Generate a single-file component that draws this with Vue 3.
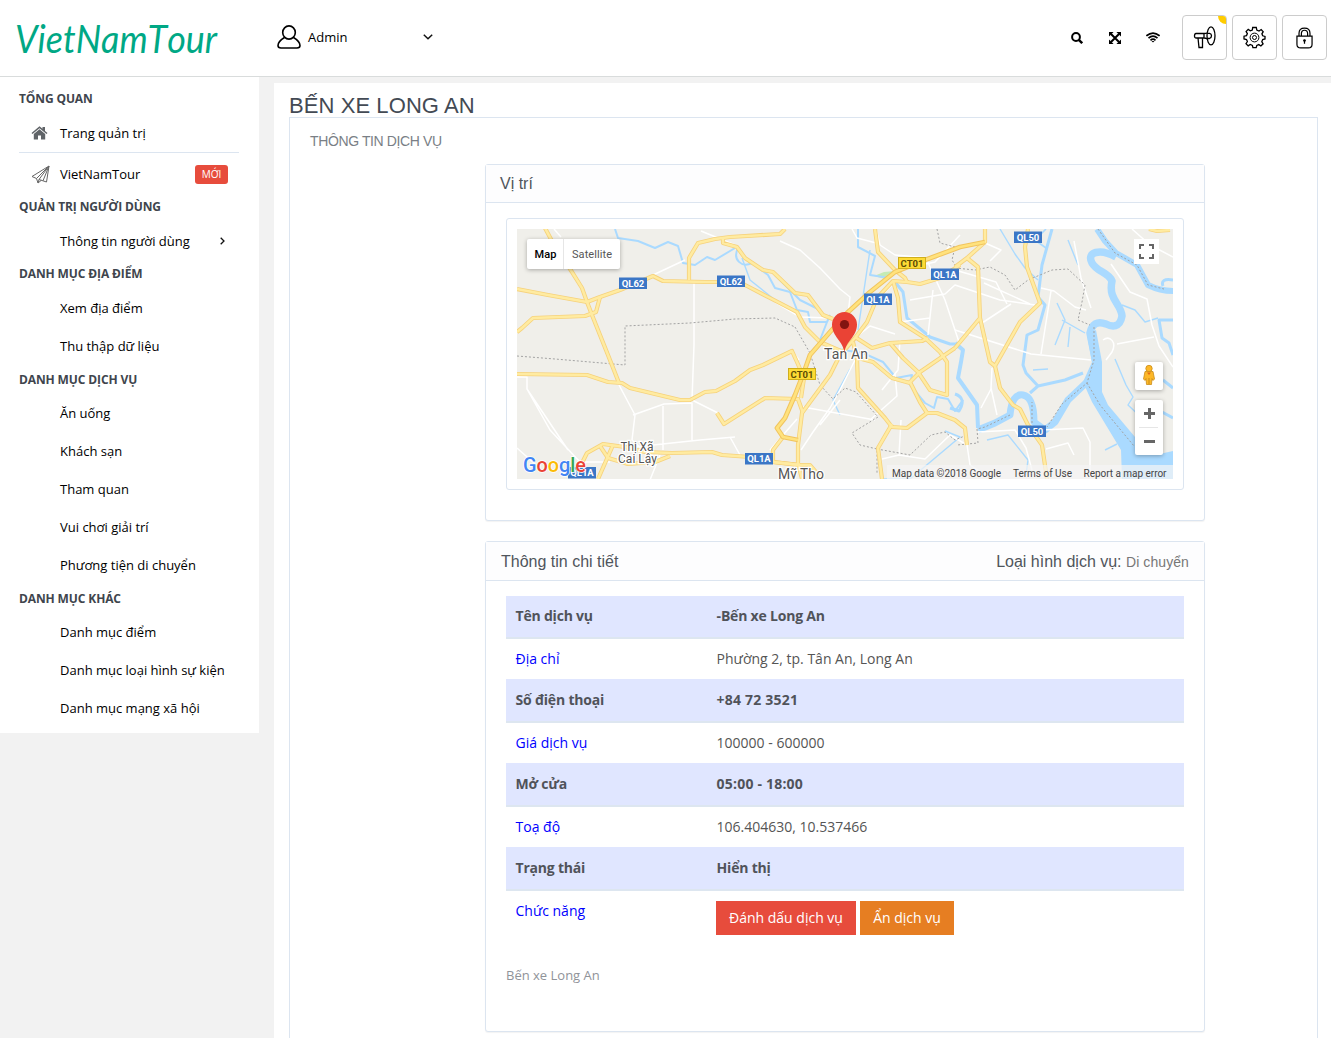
<script setup>
const sections = [
  { title: 'TỔNG QUAN', items: [{ label: 'Trang quản trị', icon: 'home', line: true }, { label: 'VietNamTour', icon: 'plane', badge: 'MỚI' }] },
  { title: 'QUẢN TRỊ NGƯỜI DÙNG', items: [{ label: 'Thông tin người dùng', arrow: true }] },
  { title: 'DANH MỤC ĐỊA ĐIỂM', items: [{ label: 'Xem địa điểm' }, { label: 'Thu thập dữ liệu' }] },
  {
    title: 'DANH MỤC DỊCH VỤ',
    items: [{ label: 'Ăn uống' }, { label: 'Khách sạn' }, { label: 'Tham quan' }, { label: 'Vui chơi giải trí' }, { label: 'Phương tiện di chuyển' }],
  },
  { title: 'DANH MỤC KHÁC', items: [{ label: 'Danh mục điểm' }, { label: 'Danh mục loại hình sự kiện' }, { label: 'Danh mục mạng xã hội' }] },
]

const rows = [
  { label: 'Tên dịch vụ', value: '-Bến xe Long An', strong: true },
  { label: 'Địa chỉ', value: 'Phường 2, tp. Tân An, Long An' },
  { label: 'Số điện thoại', value: '+84 72 3521', strong: true, numeric: true },
  { label: 'Giá dịch vụ', value: '100000 - 600000' },
  { label: 'Mở cửa', value: '05:00 - 18:00', strong: true, numeric: true },
  { label: 'Toạ độ', value: '106.404630, 10.537466' },
  { label: 'Trạng thái', value: 'Hiển thị', strong: true },
]

const highways = [
  'M545 228L553 243L572 272L582 288L587 302L592 315L608 355L619 383',
  'M517 289L548 295L587 302L600 297L620 290L653 276L663 281L705 282H738L745 285L770 298L797 312L805 327L820 342L843 352',
  'M600 297L596 312L585 316L533 318L522 328L517 332',
  'M517 374L587 375L608 382L622 383L630 388L680 400H690L705 392L716 391L735 381L750 370L763 365L792 351L797 362L804 378L801 398',
  'M689 280V258L698 243L715 239L730 237L780 234L785 229',
  'M723 237V243L737 247L745 258L763 270L773 272L795 293L808 295L823 315L833 319',
  'M960 265L940 278L920 284L907 282L893 281L877 298L867 322L855 338L840 355L830 375L802 413L798 445V463L802 479',
  'M783 437L773 450V462L800 465H810L822 479',
  'M582 463L587 453L603 444L625 447L645 452L672 453L712 452L722 455L750 457L773 462L800 465',
  'M598 479L613 445M600 446L608 458L628 464L655 462L670 456',
  'M717 413L724 424L735 417L765 398L798 399L803 413',
  'M875 229L878 252L895 270L905 278L907 282',
  'M893 281L898 298L900 322L925 338L940 352L947 362V395L930 390L918 372L903 358L890 343',
  'M855 337L872 348L890 343L922 341L928 338',
  'M955 348L920 372L910 382L920 402L927 413L907 428L892 427L885 418L858 388L857 358L853 342',
  'M858 358L873 362L892 378L910 383',
  'M892 424L878 448L882 479',
  'M927 413H937L955 420L965 428L967 445',
  'M985 229V242L967 258L955 267',
  'M967 258L978 267L980 318L955 348M980 318L990 362L995 366L1020 322L1040 303L1027 267L1025 247L1028 229',
  'M995 366L1000 388L1013 405L1020 409L1028 425L1042 445L1047 479',
  'M1149 229L1157 231L1170 230',
]
const motorways = ['M985 242L960 247L925 260L895 272L870 292L847 313L830 332L810 355L804 372L795 395L785 418L777 428L783 437L798 440']

const streets = [
  'M517 377H527V389L550 430L580 462M527 389L568 450M517 448L535 464M619 385L635 415L632 440L645 452M633 415L650 409L664 404L692 403L692 440',
  'M694 282V345L692 400L720 414M663 406V450M653 275L685 260M735 245L701 231M554 229L561 237M625 448L700 440L735 437M650 480L660 455M580 462H610',
  'M780 241L800 250L820 268L840 289L850 297L848 315M792 351L799 360M830 318L800 317L775 302M855 338L870 326L895 334M896 281L877 300',
  'M803 407L875 420M855 360L840 390L830 408L813 432L801 450M840 400L820 425M797 419L770 450M730 437L740 455M882 390L898 370L900 340M870 420L897 396L895 374',
  'M901 420L899 455L882 459M899 455L925 459L950 435L967 445M876 229L880 245L895 255L930 258M907 268L935 262L960 235M926 258L945 300L960 345M910 300L945 294L955 285L1000 300L1035 305M933 290L928 335M900 322L930 318',
  'M955 270L996 282L1007 304M1011 304L979 325M955 330L1031 354L1091 360M984 283L1030 304M985 243L1001 250L990 261M1041 288L1054 291L1075 307L1086 310M1051 291L1041 354M1074 241L1081 278L1091 308M1111 264L1130 292L1147 299L1152 325L1159 346L1173 367',
  'M992 368L991 388L997 415M981 408L991 389M978 432L1015 430L1026 448L1032 470M1042 430L1083 428L1090 442V475M1046 449L1068 443L1074 455M967 445L970 465L985 475M1103 340C1110 335 1117 342 1112 352L1106 360M1117 344L1154 337M1173 257L1150 245L1132 229M852 229L857 238L880 244',
]
const borders = [
  'M517 356L555 359L625 365V326L690 323L735 319L775 318L795 327',
  'M795 327L810 353L820 385L833 399L845 388L856 392L878 417L852 433L860 445L877 449V473M877 449L910 455L931 435L945 432L955 440L967 435',
  'M955 268L975 270L990 267L1005 275L1015 290L1028 280L1052 270L1068 269L1085 285L1082 302L1078 320L1090 325',
  'M937 229L940 243L955 247L952 260L958 270M1098 229L1115 253L1137 265L1148 285L1164 289M1094 327V360L1087 383L1062 404L1047 427M1087 383L1100 405L1134 446M1032 423V402M1010 415L985 427L977 429L978 443L957 445',
]
const rivers = [
  { w: 2, d: 'M615 229L618 238L638 241L655 248L668 242L678 246L683 263L695 265L707 257L715 260L735 248M738 248C732 260 742 268 752 263L768 275L775 288L790 292L797 310L808 312L810 322L827 322L830 315M827 322L820 340L830 348L863 353L883 362L896 378L912 375L910 385L925 403L934 408L937 397L948 399L955 411L963 400' },
  { w: 2, d: 'M858 229V247L875 256L870 275L890 278M820 310L800 300L775 275' },
  { w: 3, d: 'M895 282L903 292L907 318L930 337L950 344H955' },
  { w: 4, d: 'M955 343L963 350L961 362L958 378L977 405L978 428' },
  { w: 7, d: 'M978 430L995 423L1010 415Q1012 393 1023 395T1034 422L1045 430L1055 422L1068 400L1087 382' },
  { w: 3, d: 'M1083 373L1065 380L1038 386L1026 373L1023 365L1027 335L1038 330L1045 305L1038 297L1042 265L1052 229M1038 386L1030 393' },
  { w: 1.6, d: 'M1046 248L1035 240L1046 229' },
  { w: 1.4, d: 'M1000 229L1015 254L1025 268L1038 280M1057 303L1065 320L1055 345M1078 265L1068 240M1062 320L1085 333M1070 327L1068 347M987 440L1008 435L1028 460L1026 475M1122 305L1135 310L1145 322L1158 318M1115 359L1126 385L1133 397L1128 405L1144 420M881 479L910 479L960 437L945 431M1117 444L1105 450M1033 370L1048 369M775 300L750 280L742 258M840 415L833 400L850 369M870 250L858 330' },
  { w: 6, d: 'M1097 229L1105 241L1116 253L1137 265L1148 285Q1160 291 1173 291' },
  { w: 7.5, d: 'M1116 257C1100 248 1086 252 1092 263C1097 272 1108 272 1112 281C1108 300 1121 303 1122 316C1120 328 1112 327 1106 324Q1093 319 1090 333L1096 363' },
  { w: 3, d: 'M1173 320H1159L1162 338L1169 343L1173 355M1163 286Q1160 278 1173 280M1163 380L1173 388M1162 412L1173 418M955 394Q967 398 959 411L950 408' },
]
const shields = [
  { x: 619, y: 277.5, t: 'QL62' }, { x: 717, y: 275.5, t: 'QL62' }, { x: 864, y: 293.5, t: 'QL1A' }, { x: 931, y: 268.5, t: 'QL1A' },
  { x: 1014, y: 231.5, t: 'QL50' }, { x: 1018, y: 425.5, t: 'QL50' }, { x: 745, y: 453, t: 'QL1A' }, { x: 568, y: 467, t: 'QL1A' },
]
const tolls = [{ x: 898, y: 257, t: 'CT01' }, { x: 788, y: 368, t: 'CT01' }]
</script>

<template>
  <div class="page">
    <header class="topbar">
      <svg class="logo" width="220" height="70" viewBox="0 0 220 70">
        <text x="15" y="53" textLength="202" lengthAdjust="spacingAndGlyphs">VietNamTour</text>
      </svg>
      <div class="user">
        <svg width="24" height="24" viewBox="0 0 24 24" fill="none" stroke="#000" stroke-width="1.6">
          <ellipse cx="12" cy="7.5" rx="6.3" ry="6.6" />
          <path d="M7.5 12.5Q1 16.5 1 20.5Q1 23 4 23H20Q23 23 23 20.500Q23 16.500 16.500 12.500" />
        </svg>
        <span class="name">Admin</span>
        <svg width="10" height="6" viewBox="0 0 10 6" fill="none" stroke="#111" stroke-width="1.5"><path d="M.8 .8L5 4.800L9.200 .8" /></svg>
      </div>
      <nav class="tools">
        <svg width="12" height="12" viewBox="0 0 12 12" fill="none" stroke="#000" stroke-width="2"><circle cx="5" cy="5" r="3.900" /><path d="M7.800 7.800L11.200 11.200" stroke-width="2.400" /></svg>
        <svg width="12" height="12" viewBox="0 0 12 12"><path d="M2 2L10 10M10 2L2 10" stroke="#000" stroke-width="2" /><path d="M0 0H4.600L0 4.600ZM12 0V4.600L7.400 0ZM0 12V7.400L4.600 12ZM12 12H7.400L12 7.400Z" /></svg>
        <svg width="14" height="11" viewBox="0 0 14 11" fill="none" stroke="#000" stroke-width="1.700"><path d="M.4 3.900Q7 -1.800 13.600 3.900M2.500 6.200Q7 2.200 11.500 6.200M4.500 8.300Q7 6 9.500 8.300" /><path d="M5.500 8.900H8.500L7 10.600Z" fill="#000" stroke="none" /></svg>
      </nav>
      <div class="buttons">
        <div class="sq">
          <svg width="23" height="23" viewBox="0 0 23 23" fill="none" stroke="#000" stroke-width="1.300">
            <ellipse cx="18" cy="9.800" rx="4" ry="9" /><path d="M14.500 7Q13 7.500 11 7.500H3Q1.500 7.500 1.500 9.800T3 12H11Q13 12 14.500 13M11 7.500V12M5 12L6 21.500H9.500V12" /><path d="M14.300 7.300H16.500Q18.500 7.700 18.500 9.800T16.500 12.500H14.300" />
          </svg>
          <i class="dot"></i>
        </div>
        <div class="sq">
          <svg width="23" height="23" viewBox="0 0 23 23" fill="none" stroke="#000" stroke-width="1.300">
            <path d="M9.700 1.500H13.300L13.800 4.100L16 5L18.200 3.500L20.200 5.700L18.900 7.800L19.700 9.800L22 10.400V13L19.700 13.500L18.800 15.700L20.100 17.800L17.900 20L15.800 18.600L13.800 19.400L13.200 21.700H9.900L9.400 19.400L7.200 18.500L5.200 19.900L3 17.600L4.400 15.500L3.500 13.500L1 13V10.200L3.500 9.600L4.400 7.600L3.100 5.500L5.200 3.400L7.300 4.800L9.300 4Z" /><circle cx="11.500" cy="11.500" r="4.400" stroke-width="1" /><circle cx="11.500" cy="11.500" r="2" stroke-width="1" />
          </svg>
        </div>
        <div class="sq">
          <svg class="lock" width="17" height="22" viewBox="0 0 18 23" fill="none" stroke="#000" stroke-width="1.300">
            <path d="M3.200 9.500V6.500Q3.200 1 9 1T14.800 6.500V9.500M5.700 9.500V7Q5.700 3.300 9 3.300T12.300 7V9.500M1 9.600H17V18Q17 22 13 22H5Q1 22 1 18Z" /><circle cx="9" cy="14.200" r="1.400" fill="#000" stroke="none" /><path d="M9 14V17.500" />
          </svg>
        </div>
      </div>
    </header>

    <div class="body">
      <aside class="sidebar">
        <section v-for="s in sections" :key="s.title">
          <h6>{{ s.title }}</h6>
          <div v-for="it in s.items" :key="it.label" class="item" :class="{ line: it.line }">
            <span class="ico">
              <svg v-if="it.icon === 'home'" class="home" width="17" height="14" viewBox="0 0 16 14" fill="#606468"><path d="M0 7L8 .2L11 2.800V1H13.500V4.900L16 7L15 8L8 2.200L1 8Z" /><path d="M2.300 8L8 3.300L13.700 8V13.500H9.500V9.500H6.500V13.500H2.300Z" /></svg>
              <svg v-if="it.icon === 'plane'" width="19" height="19" viewBox="0 0 19 19" fill="none" stroke="#666" stroke-width="1"><path d="M18 1L1 11.500L5.500 13.500L18 1L8 14.500L15.500 17L18 1M18 1L12 15.800M5.500 13.500L7 18L10.300 15.300M7 18L8 14.500" /></svg>
            </span>
            <span>{{ it.label }}</span>
            <b v-if="it.badge" class="badge">{{ it.badge }}</b>
            <svg v-if="it.arrow" class="arrow" width="5" height="8" viewBox="0 0 5 8" fill="none" stroke="#111" stroke-width="1.300"><path d="M.7 .7L4 4L.7 7.300" /></svg>
          </div>
        </section>
      </aside>

      <main class="main">
        <h1>BẾN XE LONG AN</h1>
        <div class="box">
          <h2>THÔNG TIN DỊCH VỤ</h2>
          <section class="card place">
            <div class="card-head">Vị trí</div>
            <div class="frame">
              <svg class="map" width="656" height="250" viewBox="517 229 656 250">
                <rect x="517" y="229" width="656" height="250" fill="#f0efea" />
                <path d="M874 276L884 272L895 271L885 279Z" fill="#c5ebb5" />
                <g fill="none" stroke="#aadaff" stroke-linejoin="round">
                  <path v-for="r in rivers" :key="r.d" :d="r.d" :stroke-width="r.w" />
                </g>
                <path d="M1122 479L1121 450L1092 402L1083 382L1092 362L1087 335L1096 330L1102 362V392L1108 405L1135 437L1155 455L1173 451V479Z" fill="#aadaff" />
                <g fill="none" stroke="#fff" stroke-width="1.500" stroke-linejoin="round"><path v-for="d in streets" :key="d" :d="d" /></g>
                <g fill="none" stroke="#a3a3a3" stroke-width="1" stroke-dasharray="2 2"><path v-for="d in borders" :key="d" :d="d" /></g>
                <g fill="none" stroke="#f6d27c" stroke-width="4.200" stroke-linejoin="round"><path v-for="d in highways" :key="d" :d="d" /></g>
                <g fill="none" stroke="#ffeba1" stroke-width="2.500" stroke-linejoin="round"><path v-for="d in highways" :key="d" :d="d" /></g>
                <g v-for="d in motorways" :key="d" fill="none" stroke-linejoin="round"><path :d="d" stroke="#f1c45e" stroke-width="4.800" /><path :d="d" stroke="#ffe27d" stroke-width="2.800" /></g>
                <g class="shield">
                  <g v-for="s in shields" :key="s.x"><rect :x="s.x" :y="s.y" width="28" height="11.500" fill="#3b76c6" /><text :x="s.x + 14" :y="s.y + 9.200" fill="#fff">{{ s.t }}</text></g>
                  <g v-for="s in tolls" :key="s.x"><rect :x="s.x + .5" :y="s.y + .5" width="27" height="11" fill="#fddb35" stroke="#cfae1d" /><text :x="s.x + 14" :y="s.y + 9.500" fill="#5b4c05">{{ s.t }}</text></g>
                </g>
                <g class="city">
                  <text x="637" y="450.500" font-size="12" textLength="33">Thị Xã</text><text x="637.500" y="462.500" font-size="12" textLength="39">Cai Lậy</text>
                  <text x="846" y="359" font-size="14" textLength="44">Tan An</text><text x="801" y="479" font-size="14" textLength="46">Mỹ Tho</text>
                </g>
                <path d="M844.500 353C843.500 341 832 337 832 324.500A12.500 12.500 0 0 1 857 324.500C857 337 845.500 341 844.500 353Z" fill="#ea4335" /><circle cx="844.500" cy="324.500" r="4.600" fill="#811411" />
                <text class="google" x="523" y="472" textLength="63" lengthAdjust="spacingAndGlyphs"><tspan fill="#4285f4">G</tspan><tspan fill="#ea4335">o</tspan><tspan fill="#fbbc05">o</tspan><tspan fill="#4285f4">g</tspan><tspan fill="#34a853">l</tspan><tspan fill="#ea4335">e</tspan></text>
                <rect x="887" y="465" width="286" height="14" fill="#f5f5f5" fill-opacity=".7" />
                <g class="legal">
                  <text x="892" y="477" textLength="109">Map data ©2018 Google</text><text x="1013" y="477" textLength="59">Terms of Use</text><text x="1083.500" y="477" textLength="83">Report a map error</text>
                </g>
                <g class="controls">
                  <rect x="527" y="239" width="93" height="30" rx="2" /><rect x="1135" y="362" width="28" height="28" rx="2" /><rect x="1135" y="400" width="28" height="55" rx="2" />
                </g>
                <rect x="1134" y="239" width="25" height="25" fill="#fff" />
                <path d="M563.500 239V269M1139 427.500H1158" stroke="#e6e6e6" />
                <g class="modes"><text x="534.500" y="258" font-weight="500" fill="#000" textLength="22">Map</text><text x="572" y="258" fill="#565656" textLength="40">Satellite</text></g>
                <path d="M1140 249V245H1144M1149 245H1153V249M1153 254V258H1149M1144 258H1140V254" fill="none" stroke="#666" stroke-width="2" />
                <path d="M1144 413.500H1155M1149.500 408V419M1144 441.500H1155" stroke="#666" stroke-width="3" />
                <path d="M1145 371.500H1153L1154.500 379L1153 380.500L1152 378.500L1151.500 384.500H1146.500L1146 378.500L1145 380.500L1143.500 379Z" fill="#fdb827" stroke="#c98b16" stroke-width=".8" /><circle cx="1149" cy="368.500" r="3.200" fill="#fdb827" stroke="#c98b16" stroke-width=".8" /><path d="M1147 372.500H1151L1149 375Z" fill="#e56b12" /><path d="M1149 378V384" stroke="#c98b16" />
              </svg>
            </div>
          </section>

          <section class="card detail">
            <div class="card-head"><span>Thông tin chi tiết</span><span>Loại hình dịch vụ: <small>Di chuyển</small></span></div>
            <div class="table">
              <div v-for="(r, i) in rows" :key="r.label" class="row" :class="{ strong: r.strong, first: i === 0 }"><span>{{ r.label }}</span><span class="value" :class="{ numeric: r.numeric }">{{ r.value }}</span></div>
              <div class="row actions"><span>Chức năng</span><div class="btns"><button class="red">Đánh dấu dịch vụ</button><button class="orange">Ẩn dịch vụ</button></div></div>
            </div>
            <p class="desc">Bến xe Long An</p>
          </section>
        </div>
      </main>
    </div>
  </div>
</template>

<style>
body { background: #f2f2f2; overflow: hidden; }
</style>
<style scoped>
* { box-sizing: border-box; }
.page { height: 1038px; overflow: hidden; font-family: "Open Sans", "Noto Sans", sans-serif; color: #000; }
svg { display: block; flex: none; }
.topbar { height: 77px; background: #fff; border-bottom: 1px solid #d9dcdc; display: flex; align-items: center; }
.logo { margin-bottom: 6px; }
.logo text { font: italic 400 38px "Lato", sans-serif; fill: #00a885; font-kerning: none; }
.user { display: flex; align-items: center; width: 156px; margin: 0 0 2px 57px; font-size: 13px; }
.name { margin: 0 auto 0 7px; }
.tools { display: flex; align-items: center; gap: 25px; margin: 0 22px 1px auto; }
.tools svg:first-child { margin-right: 1px; }
.buttons { display: flex; gap: 5px; margin: 0 4px 2px 0; }
.sq { position: relative; width: 45px; height: 45px; border: 1px solid #ccc; border-radius: 4px; display: flex; align-items: center; justify-content: center; overflow: hidden; }
.lock { margin-top: 2px; }
.dot { position: absolute; top: 0; right: 0; width: 8px; height: 8px; background: #fc0; border-bottom-left-radius: 8px; }
.body { display: flex; align-items: flex-start; }
.sidebar { width: 259px; height: 656px; background: #fff; padding: 7px 20px 0 19px; margin-right: 15px; }
h6 { margin: 0; height: 29px; line-height: 29px; font-size: 12px; font-weight: 700; color: #40454d; letter-spacing: -.12px; white-space: nowrap; }
.item { height: 38px; display: flex; align-items: center; font-size: 13px; white-space: nowrap; }
section:nth-child(-n + 3) > .item { padding-top: 2px; }
section:nth-child(4) { padding-top: 1px; }
section:first-child > .item.line { height: 40px; margin-bottom: 1px; padding-top: 0; border-bottom: 1px solid #dce5f0; }
.ico { width: 41px; display: flex; padding-left: 12px; }
.badge { margin: 0 11px 0 auto; width: 33px; height: 19px; border-radius: 3px; background: #e74c3c; color: #fff; font-size: 10px; font-weight: 400; line-height: 18px; text-align: center; }
.arrow { margin: 0 14px 0 auto; }
.main { flex: 1; min-width: 0; margin-top: 6px; height: 955px; background: #fff; padding: 7px 13px 0 15px; font-family: "Liberation Sans", sans-serif; }
h1 { margin: 0; height: 27px; line-height: 31px; font-size: 22px; font-weight: 400; color: #434a54; letter-spacing: .08px; }
.box { height: 940px; border: 1px solid #dce5f0; padding: 14px 0 0 20px; }
h2 { margin: 0 0 14px; font-size: 14px; line-height: 18px; height: 18px; font-weight: 400; color: #7a7f86; letter-spacing: -.38px; }
.card { width: 720px; margin: 0 0 20px 175px; border: 1px solid #dce5f0; border-radius: 3px; box-shadow: 0 1px 1px rgba(0, 0, 0, .05); background: #fff; }
.place { height: 357px; }
.detail { height: 491px; }
.card-head { height: 38px; border-bottom: 1px solid #dce5f0; background: #fdfdfe; display: flex; justify-content: space-between; padding: 0 15px 0 14px; line-height: 38px; font-size: 16px; color: #50555c; }
.detail .card-head { height: 39px; line-height: 40px; padding-left: 15px; }
.card-head small { font-size: 14px; color: #777; letter-spacing: .08px; }
.frame { margin: 15px 20px; width: 678px; height: 272px; border: 1px solid #dce5f0; border-radius: 3px; padding: 10px; }
.shield text { font: 700 9.500px Roboto, sans-serif; text-anchor: middle; }
.city text { font-family: Roboto, sans-serif; fill: #555; stroke: #fff; stroke-width: 2.500px; paint-order: stroke; text-anchor: middle; }
.google { font: 500 20px Roboto, sans-serif; stroke: #fff; stroke-width: 1.500px; paint-order: stroke; }
.legal text { font: 10px Roboto, sans-serif; fill: #444; }
.controls { fill: #fff; filter: drop-shadow(0 1px 2px rgba(0, 0, 0, .3)); }
.modes text { font-family: Roboto, sans-serif; font-size: 11px; }
.table { margin: 15px 20px 0; font: 14px "Open Sans", "Noto Sans", sans-serif; }
.row { height: 40px; padding-left: 9.500px; line-height: 40px; display: grid; grid-template-columns: 200.500px 1fr; color: #555; }
.row > span:first-child { color: #00f; }
.row .value { padding-left: .6px; }
.row.strong { height: 44px; background: #e0e6ff; border-bottom: 2px solid #dde6f0; font-weight: 700; letter-spacing: -.2px; color: #50535a; line-height: 42px; }
.row.strong > span:first-child { color: #50535a; }
.row .numeric { letter-spacing: .2px; }
.row.first { height: 43px; line-height: 40px; }
.btns { display: flex; gap: 4px; padding-top: 10px; }
button { border: 0; padding: 0 0 1px; height: 34px; color: #fff; font: 14px "Open Sans", sans-serif; }
.red { width: 140px; background: #e74c3c; }
.orange { width: 94px; background: #e67e22; }
.desc { margin: 34px 20px 0; font: 13px/20px "Open Sans", sans-serif; color: #909399; }
</style>
